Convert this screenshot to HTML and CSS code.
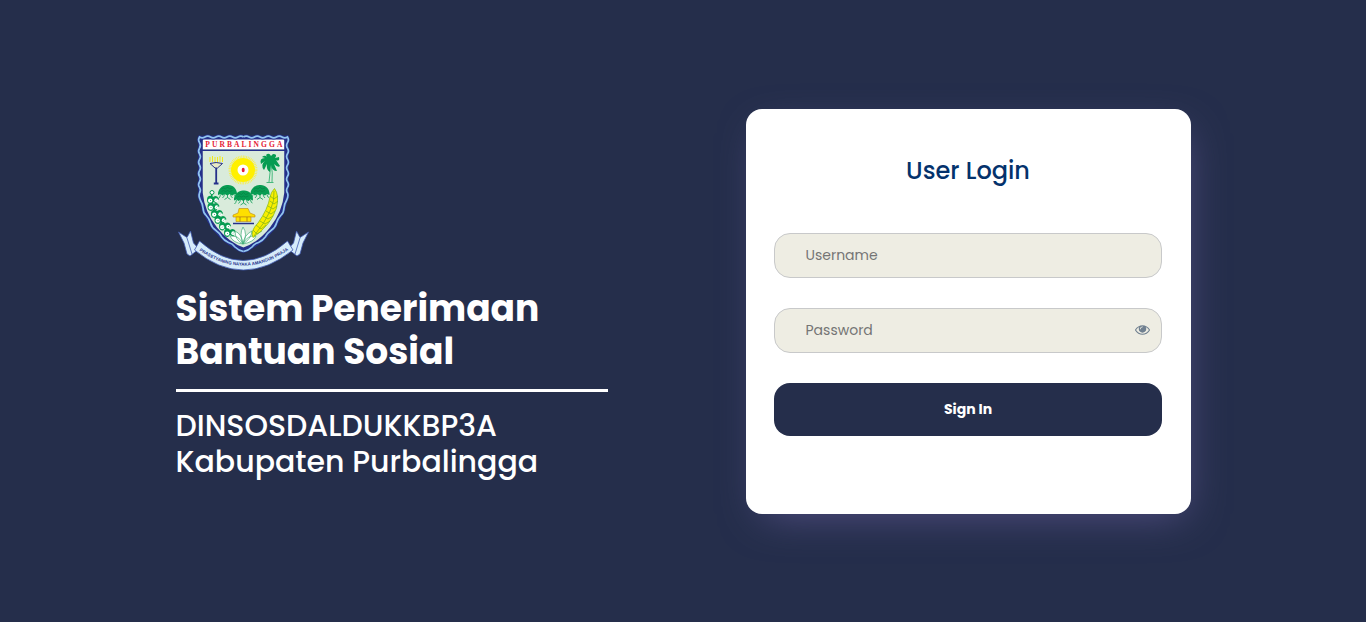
FILE: index.html
```html
<!DOCTYPE html>
<html lang="id">
<head>
<meta charset="utf-8">
<title>User Login</title>
<link rel="stylesheet" href="styles.css">
</head>
<body>
<main class="page">
  <section class="intro">
    <svg class="crest" viewBox="176 132 136 142" role="img" aria-label="Purbalingga">
      <defs>
        <g id="tree" fill="#079c52">
          <path d="M-9.500 5.500C-10-1-4-5 0-4.500C5-5 10-1 9.500 5.500L7 4.500L5 6L2 4.500L0 6L-3 4.500L-5 6L-7 4.500Z"/>
          <path d="M-7 5q-.5 3-2 4M-3 4q0 3-2 4.500M0 4v4l-3 2M0 8l3 2M3 4q0 3 2 4.500M7 5q.5 3 2 3" fill="none" stroke="#079c52" stroke-width=".8"/>
          <path d="M-6-.5l2-1 2 1 2-2 2 2 3-1M-6 2l2-1 2 1 2-1 2 1 3-1" fill="none" stroke="#08773f" stroke-width=".5"/>
        </g>
        <g id="leaf">
          <path d="M-6 1q0-5 5-4l1 1q4-3 6 2l-3 4-3-1-2 2q-4 0-4-4" fill="#079c52"/>
          <circle cx="-2.800" cy="1.600" r="2.200" fill="#fff"/><circle cx="3.200" cy="1.200" r="1.900" fill="#fff"/>
          <path d="M-3 2l1-1M3 1.500l1-1" stroke="#079c52" stroke-width=".7"/>
        </g>
        <path id="wave" d="M243.500 137q-2.750-1.800-5.500 0t-5.500 0-5.500 0-5.500 0-5.500 0-5.500 0-5.500 0-5.500 0q-1.800 2.800 0 5.600t0 5.600 0 5.600 0 5.600 0 5.600 0 5.600 0 5.600 0 5.600 0 5.600 0 5.600Q198.300 195.800 200.300 200Q202.900 204.300 203 208Q203.200 212.700 206.200 215.500Q209.400 218.800 210.500 223Q211.600 227.400 216 230.500Q219.600 233 221.500 236.700Q224.300 240.600 228.500 242.500Q232.600 243.700 235 247Q238.500 250.500 243.500 251.500"/>
        <path id="motto" d="M196 248Q243 283.500 291 248"/>
      </defs>
      <path d="M200.500 138H286.500V193C284 220 264 243 243.500 250C223 243 203 220 200.500 193Z" fill="#d9ebdb" stroke="#25308a" stroke-width="4.500"/>
      <path d="M203 139.500H284V149H203Z" fill="#fff"/>
      <path d="M202 150.200H285" stroke="#25308a" stroke-width="1.500"/>
      <g fill="none" stroke="#25308a" stroke-width="3"><use href="#wave"/><use href="#wave" transform="translate(487) scale(-1 1)"/></g>
      <g fill="none" stroke="#91c5ee" stroke-width="1.700"><use href="#wave"/><use href="#wave" transform="translate(487) scale(-1 1)"/></g>
      <text class="crest-name" x="205.300" y="147" textLength="77">PURBALINGGA</text>

      <path d="M210 157v5M212.500 156v6M215 157v6M217.500 157v6M220 156v6M222.500 157v5" stroke="#f4ea19" stroke-width="1"/>
      <path d="M210 163.500Q216 161.500 222.500 163.500L217.500 168H215Z" fill="#e8eac4" stroke="#25308a" stroke-width="1"/>
      <path d="M216.200 168V183M213.800 183.500H218.500" stroke="#25308a" stroke-width="1.800"/>
      <circle cx="243" cy="170" r="13" fill="none" stroke="#f8ef49" stroke-width="3" stroke-dasharray=".8 .8"/>
      <circle cx="243" cy="170" r="12" fill="#fff000"/>
      <circle cx="243" cy="170" r="5.500" fill="#fff"/>
      <ellipse cx="243.200" cy="170" rx="1.500" ry="2.200" fill="#e51b35"/>
      <path d="M269.500 163Q271 171 269 182M271 163Q273 173 272 182M266.500 182.500h7" fill="none" stroke="#35b373" stroke-width=".9"/>
      <path d="M270 162Q267 153 262 157L265 158Q259 158 261 164L265 161Q260 165 264 170L267 164Q266 170 270 172L271 165Q272 171 277 171L274 164Q278 168 280 166L276 160Q280 162 279 157L275 158Q278 154 273 154L271 156Q269 152 266 155Z" fill="#079c52"/>
      <use href="#tree" x="227.500" y="189.500"/><use href="#tree" x="260" y="189.500"/><use href="#tree" x="243.500" y="195"/>

      <path d="M212 191Q209 214 235 238" fill="none" stroke="#079c52" stroke-width="1.500"/>
      <circle cx="212" cy="192.500" r="2" fill="#fff" stroke="#079c52"/>
      <use href="#leaf" x="213" y="199"/><use href="#leaf" x="213.500" y="206"/><use href="#leaf" x="217" y="213"/><use href="#leaf" x="220.500" y="219"/><use href="#leaf" x="225" y="225.500"/><use href="#leaf" x="230" y="232"/>

      <path d="M239 208.500H248L250 213 255 215V217H233V215L238 213Z" fill="#ffdf00" stroke="#b98518" stroke-width=".6"/>
      <path d="M236 217H251V221.500H236Z" fill="#ffe600" stroke="#b98518" stroke-width=".6"/>
      <path d="M240 217V221.500M247 217V221.500" stroke="#986b19" stroke-width=".7"/>
      <path d="M233 223.500H254" stroke="#25308a" stroke-width="1.500"/>
      <path d="M243 244Q239 234 243 227Q248 234 243 244Q235 240 235 231Q242 234 243 244Q251 239 252 231Q244 235 243 244Q233 243 230 236Q239 235 243 244Q254 242 256 236Q247 235 243 244" fill="#fff" stroke="#42ae79" stroke-width=".7"/>

      <path d="M274.500 188.500Q279.500 195 276.500 208Q271 225 253 237.500Q250 231 258 223Q268 209 270 197Q271 192 274.500 188.500Z" fill="#f9ef00" stroke="#8fbd17" stroke-width=".8"/>
      <path d="M274 191Q276 209 254 236M270 196l4 3 4-3M270 201l4 3 4-3M268 206l5 3 4-3M266 211l5 3 4-3M263 216l5 3 5-3M260 221l5 3 5-3M256 225l5 4 5-4M253 230l4 4 5-3" fill="none" stroke="#7aaf1d" stroke-width=".7"/>

      <g fill="#d6ecfa" stroke="#4059b0" stroke-width=".8" stroke-linejoin="round">
        <path d="M178.500 232L187 237.500 190.500 231 193.500 243 199 249 190 256 187 254 184 243Z"/>
        <path d="M308.500 232L300 237.500 296.500 231 293.500 243 288 249 297 256 300 254 303 243Z"/>
        <path d="M187 238l5 16M300 238l-5 16" fill="none"/>
        <path d="M199.500 241Q243 280 287.500 241L293 250Q243 290 194.500 250Z"/>
      </g>
      <text class="crest-motto"><textPath href="#motto" startOffset="4" textLength="96">PRASETYANING NAYAKA AMANGUN PRAJA</textPath></text>
    </svg>
    <h1 class="title">Sistem Penerimaan<br>Bantuan Sosial</h1>
    <h2 class="subtitle">DINSOSDALDUKKBP3A<br>Kabupaten Purbalingga</h2>
  </section>
  <form class="card">
    <h3 class="card-title">User Login</h3>
    <input class="field" type="text" placeholder="Username" aria-label="Username">
    <div class="field-wrap">
      <input class="field" type="password" placeholder="Password" aria-label="Password">
      <svg class="eye" viewBox="0 0 1792 1792" aria-hidden="true"><path d="M1664 960q-152-236-381-353 61 104 61 225 0 185-131.500 316.500t-316.500 131.500-316.500-131.500-131.500-316.500q0-121 61-225-229 117-381 353 133 205 333.500 326.500t434.500 121.500 434.500-121.500 333.500-326.500zm-720-384q0-20-14-34t-34-14q-125 0-214.500 89.500t-89.500 214.500q0 20 14 34t34 14 34-14 14-34q0-86 61-147t147-61q20 0 34-14t14-34zm848 384q0 34-20 69-140 230-376.500 368.500t-499.500 138.500-499.500-139-376.500-368q-20-35-20-69t20-69q140-229 376.500-368t499.500-139 499.500 139 376.500 368q20 35 20 69z"/></svg>
    </div>
    <button class="submit" type="button">Sign In</button>
  </form>
</main>
</body>
</html>
```
FILE: styles.css
```css
* { box-sizing: border-box; }
body { margin: 0; background: #252e4b; font-family: Poppins, Inter, "Open Sans", sans-serif; }
.page { display: flex; align-items: flex-start; justify-content: space-between; height: 622px; padding: 109px 175px 0 176px; }
.intro { width: 432px; padding-top: 23px; color: #fff; }
.crest { display: block; width: 136px; height: 142px; }
.crest-name { font: bold 7.5px "Liberation Serif", serif; fill: #e51b35; }
.crest-motto { font: bold 4.4px "Liberation Sans", sans-serif; fill: #25308a; }
.title { margin: 13px 0 0 -.5px; padding-bottom: 16px; border-bottom: 3px solid #fff; font-size: 36px; font-weight: 700; line-height: 43px; white-space: nowrap; }
.subtitle { margin: 16px 0 0 -.5px; font-size: 30px; font-weight: 500; line-height: 36px; white-space: nowrap; }
.card { width: 445px; height: 405px; padding: 47px 29px 0 28px; border-radius: 16px; background: #fff; box-shadow: 5px 12px 42px -12px #555186; }
.card-title { margin: 0 0 47px; color: #04326c; font-size: 24px; font-weight: 500; line-height: 30px; text-align: center; }
.field { display: block; width: 388px; height: 45px; margin-bottom: 30px; padding: 0 30.5px; border: 1px solid #c8c9ca; border-radius: 16px; background: #eeede3; font: 14px Poppins, Inter, "Open Sans", sans-serif; }
.field::placeholder { color: #757575; }
.field-wrap { position: relative; }
.eye { position: absolute; top: 14px; right: 12px; width: 15px; height: 15px; fill: #708090; }
.submit { display: block; width: 388px; height: 53px; border: 0; border-radius: 16px; background: #252e4b; color: #fff; font: 700 14px Poppins, Inter, "Open Sans", sans-serif; }
```
